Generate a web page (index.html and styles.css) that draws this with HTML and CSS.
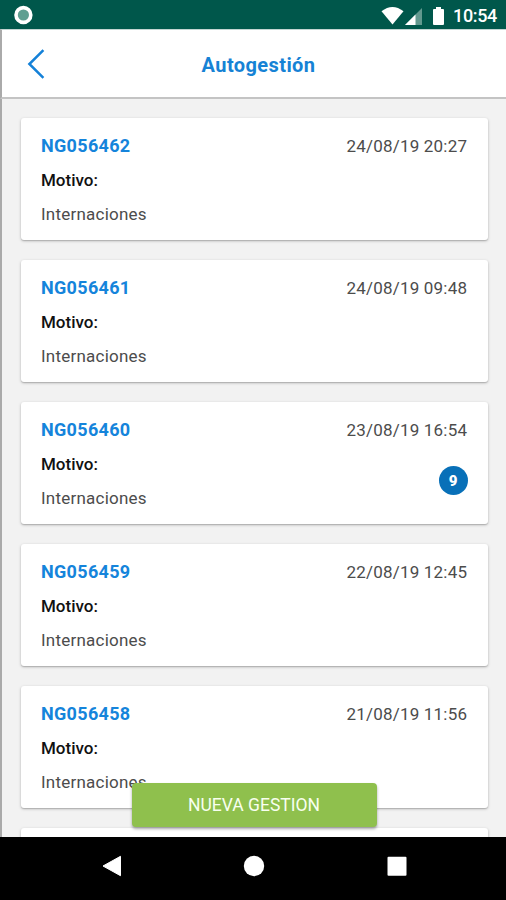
FILE: index.html
```html
<!DOCTYPE html>
<html lang="es">
<head>
<meta charset="utf-8">
<title>Autogestión</title>
<link rel="stylesheet" href="styles.css">
</head>
<body>
<div class="phone">
  <div class="status">
    <svg class="dot" width="20" height="20" viewBox="0 0 20 20"><circle cx="10.4" cy="10" r="7.4" fill="#5f9f91" stroke="#fff" stroke-width="3.6"/></svg>
    <div class="status-right">
      <svg class="signals" width="66" height="20" viewBox="0 0 66 20">
        <path d="M-.5 5.2Q10.5 -3.4 21.5 5.2L10.5 18.5Z" fill="#fff"/>
        <path d="M40 2V19H23Z" fill="#62998f"/>
        <path d="M33.5 8.5V19H23Z" fill="#fff"/>
        <path d="M54 1h5v2h2q1 0 1 1v14q0 1-1 1h-9q-1 0-1-1v-14q0-1 1-1h2z" fill="#fff"/>
      </svg>
      <span class="clock">10:54</span>
    </div>
  </div>
  <header class="header">
    <svg class="back" width="18" height="30" viewBox="0 0 18 30"><path d="M16.4 1.2L2.4 15l14 13.8" fill="none" stroke="#1481d8" stroke-width="2.5"/></svg>
    <h1>Autogestión</h1>
  </header>
  <main class="content">
    <div class="list">
      <article class="card"><div class="row"><span class="code">NG056462</span><span class="date">24/08/19 20:27</span></div><div class="label">Motivo:</div><div class="reason">Internaciones</div></article>
      <article class="card"><div class="row"><span class="code">NG056461</span><span class="date">24/08/19 09:48</span></div><div class="label">Motivo:</div><div class="reason">Internaciones</div></article>
      <article class="card"><div class="row"><span class="code">NG056460</span><span class="date">23/08/19 16:54</span></div><div class="label">Motivo:</div><div class="reason">Internaciones</div><span class="badge">9</span></article>
      <article class="card"><div class="row"><span class="code">NG056459</span><span class="date">22/08/19 12:45</span></div><div class="label">Motivo:</div><div class="reason">Internaciones</div></article>
      <article class="card"><div class="row"><span class="code">NG056458</span><span class="date">21/08/19 11:56</span></div><div class="label">Motivo:</div><div class="reason">Internaciones</div></article>
      <article class="card"></article>
    </div>
    <button class="new">NUEVA GESTION</button>
  </main>
  <nav class="nav">
    <svg width="20" height="22" viewBox="0 0 20 22"><path d="M1 11L18.5 1.3V20.7Z" fill="#fff" stroke="#fff" stroke-linejoin="round"/></svg>
    <svg width="22" height="22" viewBox="0 0 22 22"><circle cx="11" cy="11" r="10.2" fill="#fff"/></svg>
    <svg width="20" height="22" viewBox="0 0 20 22"><rect x=".5" y="1.7" width="19" height="19" rx="1" fill="#fff"/></svg>
  </nav>
</div>
</body>
</html>
```
FILE: styles.css
```css
* { box-sizing: border-box; }
body { margin: 0; font-family: Roboto, "Liberation Sans", sans-serif; }
.phone { width: 506px; height: 900px; display: flex; flex-direction: column; overflow: hidden; }
.status { height: 29px; flex: none; display: flex; align-items: center; justify-content: space-between; padding: 1px 9px 0 13px; background: #00574b; }
.status-right { display: flex; align-items: center; gap: 5px; }
.status svg { display: block; }
.signals { margin-top: 1px; overflow: visible; }
.clock { color: #fff; font-size: 18px; font-weight: 500; line-height: 20px; width: 44px; white-space: nowrap; letter-spacing: -.35px; padding-top: 2px; }
.header { height: 70px; flex: none; display: grid; grid-template-columns: 60px 1fr 60px; align-items: center; padding: 0 0 0 10px; background: #fff; border-top: 1px solid #c3d5d2; border-bottom: 2px solid #c4c4c4; border-left: 2px solid #aaa; }
.back { margin: 1px 0 0 15px; }
h1 { margin: 3px 0 0 -1px; color: #1682d5; font-size: 20px; font-weight: 700; letter-spacing: .4px; line-height: 24px; text-align: center; }
.content { height: 738px; flex: none; position: relative; overflow: hidden; background: #f2f2f2; border-left: 2px solid #aaa; }
.list { display: flex; flex-direction: column; gap: 20.1px; padding: 19px 18px 0 19px; }
.card { position: relative; height: 122px; flex: none; padding: 17px 21px 0 20px; border-radius: 3px; background: #fff; box-shadow: 0 1px 3px rgba(0,0,0,.25), 0 1px 1px rgba(0,0,0,.12); }
.row { display: flex; justify-content: space-between; line-height: 22px; }
.code { color: #1584db; font-size: 18px; font-weight: 700; letter-spacing: .32px; }
.date { margin-right: -.2px; color: #4c4c4c; font-size: 17px; letter-spacing: .2px; }
.label { margin-top: 12px; color: #111; font-size: 17px; font-weight: 500; line-height: 22px; }
.reason { margin-top: 12px; color: #4c4c4c; font-size: 17px; letter-spacing: .22px; line-height: 22px; }
.badge { position: absolute; right: 20.5px; top: 63.5px; width: 29px; height: 29px; border-radius: 50%; background: #0870b8; color: #fff; font-size: 15px; font-weight: 900; line-height: 30px; text-align: center; }
.new { position: absolute; left: 129.5px; top: 684px; width: 245px; height: 44px; padding: 0; border: 0; border-radius: 4px; background: #8fc04d; color: #f8fff0; font: 400 17.5px/44px Roboto, sans-serif; box-shadow: 0 2px 3px rgba(0,0,0,.35); }
.nav { height: 63px; flex: none; display: flex; justify-content: space-between; padding: 18px 99.5px 0 101.5px; background: #000; }
```
